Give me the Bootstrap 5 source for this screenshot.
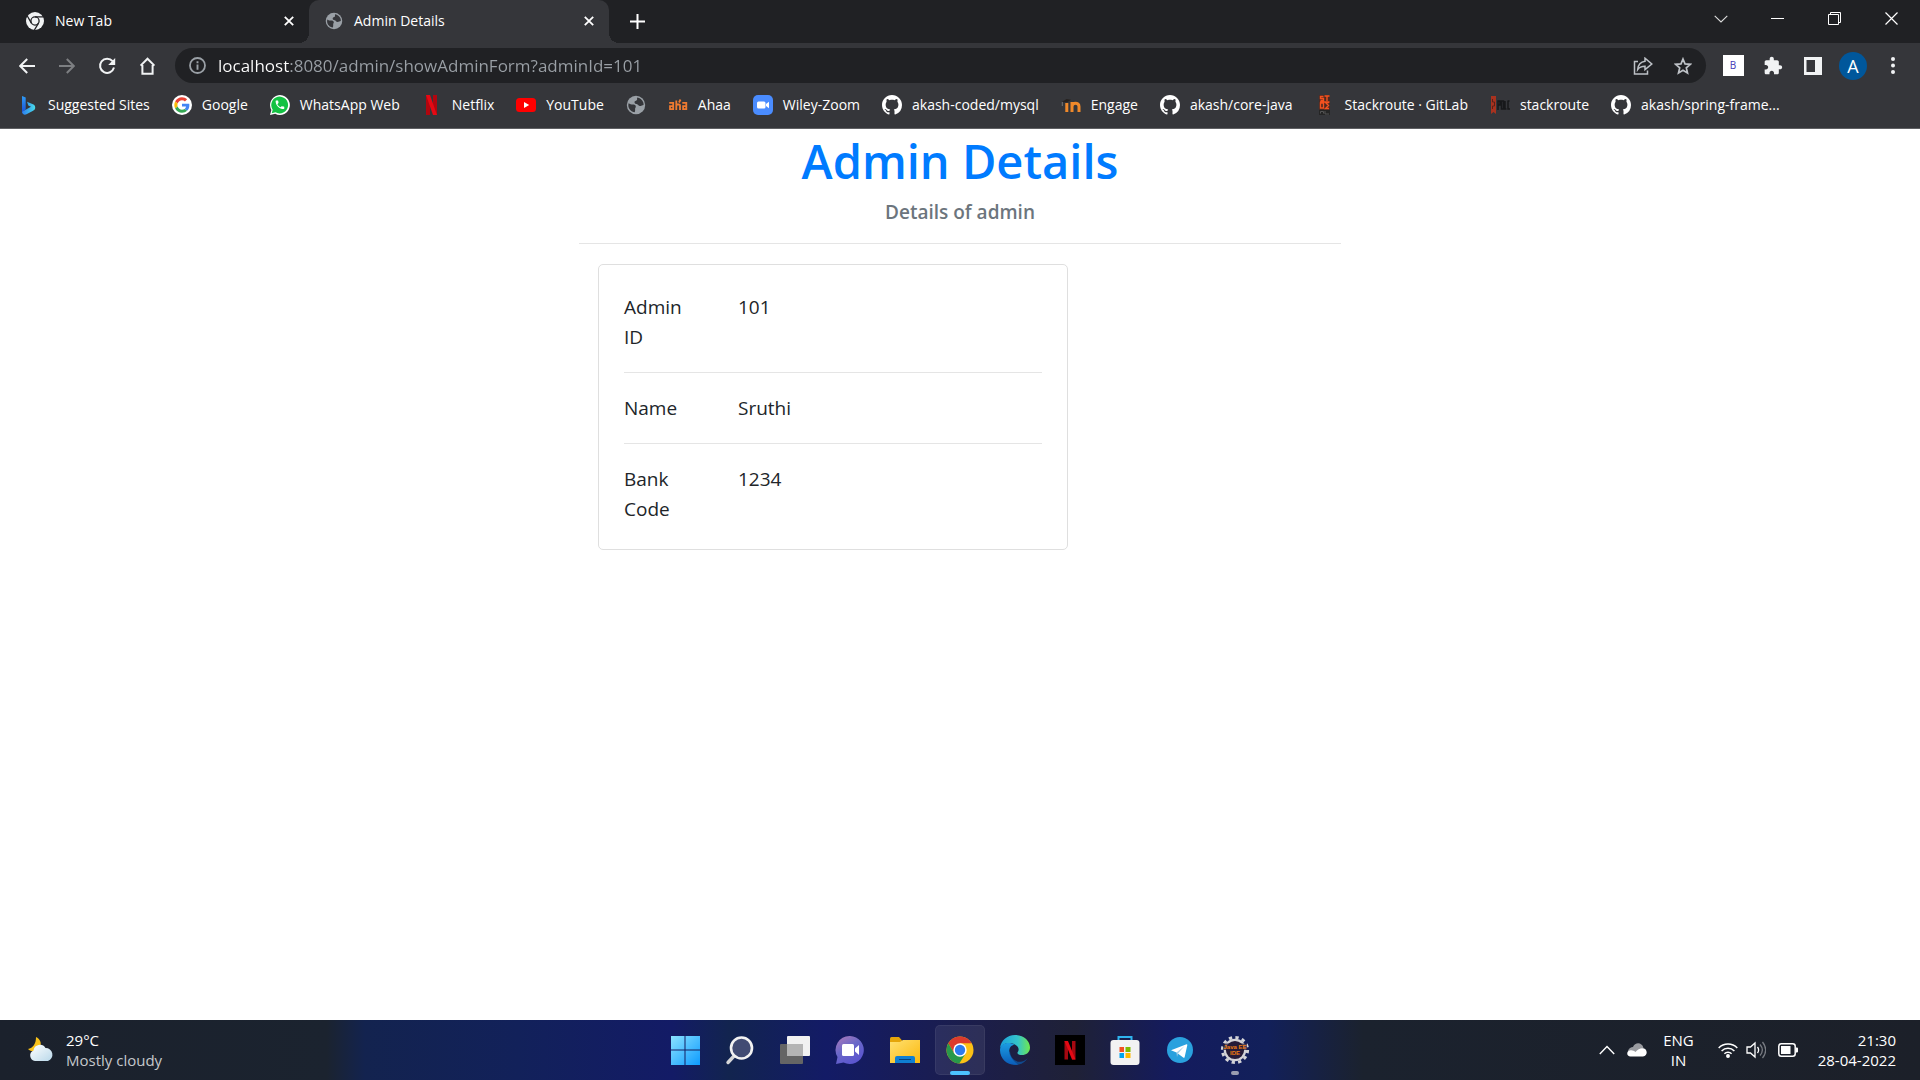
<!DOCTYPE html>
<html lang="en">
<head>
<meta charset="utf-8">
<meta name="viewport" content="width=device-width, initial-scale=1">
<title>Admin Details</title>
<link href="https://cdn.jsdelivr.net/npm/bootstrap@5.3.0/dist/css/bootstrap.min.css" rel="stylesheet">
<style>
  body { font-family: "Open Sans", "Noto Sans", sans-serif; background: #fff; overflow-x: hidden; }
  svg { display: block; flex: none; }
  button { background: none; border: 0; padding: 0; color: inherit; }
  .ui-text { font-size: 14px; line-height: 20px; }

  /* tab strip */
  .tab-strip { background: #202124; color: #fff; height: 43px; }
  .browser-tab { height: 43px; padding: 0 11px 2px 16px; gap: 11px; width: 300px; }
  .browser-tab.first { width: 309px; padding-left: 26px; }
  .browser-tab.current { background: #35363a; border-radius: 10px 10px 0 0; position: relative; }
  .browser-tab.current::before, .browser-tab.current::after {
    content: ""; position: absolute; bottom: 0; width: 10px; height: 10px;
  }
  .browser-tab.current::before { left: -10px; background: radial-gradient(circle at 0 0, transparent 10px, #35363a 10px); }
  .browser-tab.current::after { right: -10px; background: radial-gradient(circle at 100% 0, transparent 10px, #35363a 10px); }
  .icon-btn { width: 40px; height: 35px; display: flex; align-items: center; justify-content: center; flex: none; }
  .close-btn { width: 18px; height: 24px; display: flex; align-items: center; justify-content: center; }
  .window-btn { width: 57px; height: 37px; display: flex; align-items: center; justify-content: center; }

  /* toolbar */
  .toolbar { background: #35363a; color: #f1f3f4; padding: 5px 7px 0 7px; }
  .omnibox { background: #202124; border-radius: 18px; height: 35px; margin: 0 7px 0 8px; padding-left: 14px; padding-right: 3px; gap: 12px; }
  .url-input {
    border: 0; outline: 0; padding: 0; font-size: 17px; height: 30px; color: transparent;
    background: linear-gradient(90deg, #fff 72px, #9aa0a6 72px); -webkit-background-clip: text; background-clip: text;
  }
  .avatar { width: 28px; height: 28px; border-radius: 50%; background: #00579b; font-size: 18px; line-height: 28px; text-align: center; color: #fff; }
  .ext-b { width: 21px; height: 21px; background: #fff; color: #4338b5; font-size: 10px; line-height: 21px; text-align: center; }

  /* bookmarks */
  .bookmarks { background: #35363a; height: 46px; padding: 0 18px 2px; gap: 22px; border-bottom: 1px solid #5f6063; }
  .bookmarks a { color: #fff; text-decoration: none; display: flex; align-items: center; gap: 10px; white-space: nowrap; }

  /* page */
  .details-page { max-width: 762px; width: 100%; }
  .details-page h1 { color: #007bff; font-size: 47px; line-height: 60px; font-weight: 600; margin: 2px 0 9px; }
  .details-page h2 { color: #6c757d; font-size: 19px; line-height: 24px; font-weight: 600; margin: 0; }
  .details-page hr { margin: 19px 0 20px; border-top: 1px solid #e5e5e5; opacity: 1; }
  .details-page .row { --bs-gutter-x: 38px; }
  .details-page .card { border-color: #dfdfdf; border-radius: 5px; }
  .details-page .card-body { padding: 27px 25px 25px; font-size: 19px; line-height: 30px; color: #212529; }
  .details-page .card hr { margin: 20px 0; }

  /* taskbar */
  .taskbar {
    height: 60px; color: #fff; font-size: 15px; line-height: 20px;
    background: linear-gradient(90deg, #1b212c 0, #1b232f 17%, #13234f 19%, #12215a 27%, #131b66 35%, #12244f 38%, #131b66 43%, #1c1e4a 51%, #1f2136 56%, #141b5e 61%, #12205a 66%, #1b222e 71%, #1c2029 100%);
  }
  .task-list { gap: 5px; }
  .task-btn { width: 50px; height: 50px; display: flex; align-items: center; justify-content: center; position: relative; border-radius: 5px; }
  .task-btn.active { background: rgba(255,255,255,.08); box-shadow: inset 0 0 0 1px rgba(255,255,255,.06); }
  .task-btn.active::after, .task-btn.open::after { content: ""; position: absolute; bottom: 0; height: 4px; border-radius: 2px; }
  .task-btn.active::after { width: 20px; background: #4cc2ff; }
  .task-btn.open::after { width: 8px; background: #9a9db0; }
  .weather-sub { color: #c5c8cc; }
  .side { flex: 1 1 0; }
</style>
</head>
<body class="d-flex flex-column min-vh-100">

<svg width="0" height="0" class="position-absolute" aria-hidden="true">
  <symbol id="github" viewBox="0 0 16 16"><path fill="#fff" d="M8 0C3.58 0 0 3.58 0 8c0 3.54 2.29 6.53 5.47 7.59.4.07.55-.17.55-.38 0-.19-.01-.82-.01-1.49-2.01.37-2.53-.49-2.69-.94-.09-.23-.48-.94-.82-1.13-.28-.15-.68-.52-.01-.53.63-.01 1.08.58 1.23.82.72 1.21 1.87.87 2.33.66.07-.52.28-.87.51-1.07-1.78-.2-3.64-.89-3.64-3.95 0-.87.31-1.59.82-2.15-.08-.2-.36-1.02.08-2.12 0 0 .67-.21 2.2.82.64-.18 1.32-.27 2-.27.68 0 1.36.09 2 .27 1.53-1.04 2.2-.82 2.2-.82.44 1.1.16 1.92.08 2.12.51.56.82 1.27.82 2.15 0 3.07-1.87 3.75-3.65 3.95.29.25.54.73.54 1.48 0 1.07-.01 1.93-.01 2.2 0 .21.15.46.55.38A8.01 8.01 0 0 0 16 8c0-4.42-3.58-8-8-8z"/></symbol>
  <symbol id="globe" viewBox="0 0 20 20"><circle cx="10" cy="10" r="9.2" fill="#9aa0a6"/><path fill="#35363a" d="M2.6 8.2c1.2 1 2.700 1.200 4.200 1.200 1.700 0 3 .6 3 2 0 1-.7 1.300-.7 2.300 0 1.100.2 2.200-.4 3.600C4.900 16.700 2.300 13.800 2.300 10z"/><path fill="#35363a" d="M11.200 2.500c2.700.4 5 2.200 6 4.800.3.900.4 1.800.4 2.700-1.300.3-2.300 1-3.600 1-1.700 0-1.900-1.700-3.300-1.900-1.200-.2-2.200-.6-2.200-1.900 0-1.500 1.900-1.200 2.500-2.200.4-.8-.2-1.600.2-2.500z"/></symbol>
  <symbol id="cross" viewBox="0 0 10 10"><path d="M.8.8l8.400 8.400M9.200.8L.8 9.200" fill="none" stroke="currentColor" stroke-width="1.800"/></symbol>
</svg>

<header>
  <div class="tab-strip d-flex align-items-start ui-text">
    <div class="browser-tab first d-flex align-items-center">
      <svg width="18" height="18" viewBox="0 0 18 18"><circle cx="9" cy="9" r="9" fill="#f1f3f4"/><circle cx="9" cy="9" r="4.100" fill="none" stroke="#202124" stroke-width="1.300"/><path d="M9 4.900h8.500M5.400 11.100L1.300 4M12.500 11.100L8.400 18" stroke="#202124" stroke-width="1.300"/></svg>
      <span class="flex-grow-1">New Tab</span>
      <button class="close-btn" aria-label="Close New Tab"><svg width="10" height="10"><use href="#cross"/></svg></button>
    </div>
    <div class="browser-tab current d-flex align-items-center">
      <svg width="18" height="18"><use href="#globe"/></svg>
      <span class="flex-grow-1">Admin Details</span>
      <button class="close-btn" aria-label="Close Admin Details"><svg width="10" height="10"><use href="#cross"/></svg></button>
    </div>
    <button class="icon-btn ms-2 mt-1" aria-label="New tab"><svg width="15" height="15" viewBox="0 0 15 15"><path d="M7.500 0v15M0 7.500h15" stroke="#fff" stroke-width="2"/></svg></button>
    <div class="d-flex ms-auto">
      <button class="window-btn" aria-label="Search tabs"><svg width="14" height="8" viewBox="0 0 14 8"><path d="M.7.8L7 7 13.300.8" fill="none" stroke="#ddd" stroke-width="1.100"/></svg></button>
      <button class="window-btn" aria-label="Minimize"><svg width="13" height="1"><path d="M0 .5h13" stroke="#fff"/></svg></button>
      <button class="window-btn" aria-label="Restore"><svg width="13" height="13" viewBox="0 0 13 13"><path d="M.5 2.500h10v10H.5zM2.500 2.500v-2h10v10h-2" fill="none" stroke="#fff"/></svg></button>
      <button class="window-btn" aria-label="Close"><svg width="13" height="13" viewBox="0 0 13 13"><path d="M.5.5l12 12M12.500.5l-12 12" stroke="#fff" stroke-width="1.200"/></svg></button>
    </div>
  </div>

  <div class="toolbar d-flex align-items-center">
    <button class="icon-btn" aria-label="Back"><svg width="16" height="16" viewBox="0 0 16 16"><path d="M16 8H1.500M8.200 1L1.200 8l7 7" fill="none" stroke="#f1f3f4" stroke-width="2"/></svg></button>
    <button class="icon-btn" aria-label="Forward"><svg width="16" height="16" viewBox="0 0 16 16"><path d="M0 8h14.500M7.800 1l7 7-7 7" fill="none" stroke="#7d7f82" stroke-width="2"/></svg></button>
    <button class="icon-btn" aria-label="Reload"><svg width="18" height="18" viewBox="0 0 18 18"><path d="M14.600 4.200A7.100 7.100 0 1 0 16 10.600" fill="none" stroke="#f1f3f4" stroke-width="2"/><path d="M17.200 1v7h-7z" fill="#f1f3f4"/></svg></button>
    <button class="icon-btn" aria-label="Home"><svg width="17" height="18" viewBox="0 0 17 18"><path d="M1.600 8.600L8.500 1.700l6.900 6.900M3.400 8v8.800h10.200V8" fill="none" stroke="#f1f3f4" stroke-width="2"/></svg></button>
    <div class="omnibox d-flex align-items-center flex-grow-1">
      <svg width="17" height="17" viewBox="0 0 17 17"><circle cx="8.500" cy="8.500" r="7.500" fill="none" stroke="#9aa0a6" stroke-width="1.800"/><path d="M8.500 4.200v2M8.500 7.400v5.400" stroke="#9aa0a6" stroke-width="1.900"/></svg>
      <input class="url-input flex-grow-1" type="text" aria-label="Address" value="localhost:8080/admin/showAdminForm?adminId=101">
      <div class="d-flex">
        <button class="icon-btn" aria-label="Share"><svg width="20" height="18" viewBox="0 0 20 18"><path d="M5 4.500H1.500V17h13v-3.500" fill="none" stroke="#bdc1c6" stroke-width="1.500"/><path d="M12 4.300V1.200L18.800 7 12 12.600V9.300c-3.500 0-5.600.8-7.300 3.200.4-4.300 2.800-7.600 7.300-8.200z" fill="none" stroke="#bdc1c6" stroke-width="1.500"/></svg></button>
        <button class="icon-btn" aria-label="Bookmark"><svg width="18" height="18" viewBox="0 0 18 18"><path d="M9 2l2 4.900 5.300.4-4 3.500 1.200 5.200L9 13.200 4.500 16l1.200-5.200-4-3.500L7 6.900z" fill="none" stroke="#bdc1c6" stroke-width="1.700"/></svg></button>
      </div>
    </div>
    <button class="icon-btn" aria-label="Bootstrap extension"><span class="ext-b">B</span></button>
    <button class="icon-btn" aria-label="Extensions"><svg width="20" height="20" viewBox="0 0 24 24"><path fill="#f1f3f4" d="M20.500 11H19V7c0-1.100-.9-2-2-2h-4V3.500C13 2.120 11.880 1 10.500 1S8 2.120 8 3.500V5H4c-1.100 0-1.990.9-1.990 2v3.800H3.500c1.490 0 2.700 1.210 2.700 2.700s-1.210 2.700-2.700 2.700H2V20c0 1.100.9 2 2 2h3.800v-1.500c0-1.490 1.210-2.700 2.700-2.700 1.490 0 2.700 1.210 2.700 2.700V22H17c1.100 0 2-.9 2-2v-4h1.500c1.380 0 2.500-1.120 2.500-2.500S21.880 11 20.500 11z"/></svg></button>
    <button class="icon-btn" aria-label="Side panel"><svg width="18" height="18" viewBox="0 0 18 18"><path fill="#f1f3f4" fill-rule="evenodd" d="M0 0h18v18H0zM2.500 3v12H11V3z"/></svg></button>
    <button class="icon-btn" aria-label="Profile"><span class="avatar">A</span></button>
    <button class="icon-btn" aria-label="Menu"><svg width="4" height="17" viewBox="0 0 4 17" fill="#f1f3f4"><circle cx="2" cy="2" r="2"/><circle cx="2" cy="8.500" r="2"/><circle cx="2" cy="15" r="2"/></svg></button>
  </div>

  <nav class="bookmarks d-flex align-items-center ui-text" aria-label="Bookmarks">
    <a href="#"><svg width="20" height="20" viewBox="0 0 20 20"><defs><linearGradient id="bg1" x1="0" y1="0" x2="0" y2="1"><stop offset="0" stop-color="#2f9cf5"/><stop offset="1" stop-color="#1b52d8"/></linearGradient><linearGradient id="bg2"><stop offset="0" stop-color="#2b7cf0"/><stop offset="1" stop-color="#49dbe8"/></linearGradient></defs><path fill="url(#bg1)" d="M4 1l3.700 1.600v12L4 17z"/><path fill="url(#bg2)" d="M4 16.800l9-5-2.700-1.300L9 6.800l6.500 2.700c1.500 1 2 2.400 1.500 4.300-.4 1-1 1.500-1.900 2L8 19.500c-2 .6-4-.7-4-2.700z"/></svg>Suggested Sites</a>
    <a href="#"><svg width="20" height="20" viewBox="0 0 48 48"><circle cx="24" cy="24" r="24" fill="#fff"/><g transform="translate(5.500 5.500) scale(.77)"><path fill="#EA4335" d="M24 9.500c3.540 0 6.710 1.220 9.210 3.600l6.850-6.850C35.900 2.380 30.470 0 24 0 14.620 0 6.510 5.380 2.560 13.220l7.980 6.190C12.430 13.720 17.740 9.500 24 9.500z"/><path fill="#4285F4" d="M46.980 24.550c0-1.570-.15-3.090-.38-4.550H24v9.020h12.940c-.58 2.960-2.260 5.480-4.780 7.180l7.730 6c4.510-4.180 7.090-10.360 7.090-17.650z"/><path fill="#FBBC05" d="M10.530 28.590c-.48-1.450-.76-2.990-.76-4.590s.27-3.140.76-4.590l-7.980-6.190C.92 16.460 0 20.120 0 24c0 3.880.92 7.540 2.560 10.780l7.970-6.190z"/><path fill="#34A853" d="M24 48c6.480 0 11.930-2.130 15.890-5.810l-7.730-6c-2.150 1.450-4.920 2.300-8.160 2.300-6.260 0-11.570-4.220-13.470-9.910l-7.980 6.190C6.510 42.620 14.620 48 24 48z"/></g></svg>Google</a>
    <a href="#"><svg width="20" height="20" viewBox="0 0 20 20"><path fill="#fff" d="M0 20l1.400-5A9.900 9.900 0 1 1 5.200 18.700z"/><path fill="#13c243" d="M1.700 18.300l1-3.600a8.400 8.400 0 1 1 2.800 2.600z"/><g transform="translate(4.200 4) scale(.48)"><path fill="#fff" d="M6.620 10.790c1.440 2.830 3.760 5.140 6.590 6.590l2.200-2.200c.27-.27.67-.36 1.020-.24 1.120.37 2.330.57 3.570.57.55 0 1 .45 1 1V20c0 .55-.45 1-1 1-9.390 0-17-7.610-17-17 0-.55.45-1 1-1h3.500c.55 0 1 .45 1 1 0 1.250.2 2.450.57 3.570.11.35.03.74-.25 1.020l-2.200 2.200z"/></g></svg>WhatsApp Web</a>
    <a href="#"><svg width="20" height="20" viewBox="0 0 20 20"><path fill="#b1060f" d="M4 0h4v20H4zM11 0h4v20h-4z"/><path fill="#e50914" d="M4 0h4l7 20h-4z"/></svg>Netflix</a>
    <a href="#"><svg width="20" height="20" viewBox="0 0 20 20"><rect y="3" width="20" height="14" rx="3.500" fill="#f00"/><path fill="#fff" d="M8 7l5.200 3L8 13z"/></svg>YouTube</a>
    <a href="#" aria-label="Bookmark"><svg width="20" height="20"><use href="#globe"/></svg></a>
    <a href="#"><svg width="20" height="20" viewBox="0 0 20 20" fill="none" stroke="#ef7a30" stroke-width="1.800"><path d="M1.200 7.900h4v6.200H2v-3h3.200M8.300 5.500V15M8.300 9.500h2.700q1 0 1 1V15M11 7.500l1.500-3M14.300 7.900h4v6.200h-3.200v-3h3.200"/></svg>Ahaa</a>
    <a href="#"><svg width="20" height="20" viewBox="0 0 20 20"><rect width="20" height="20" rx="5" fill="#4a8cff"/><rect x="4" y="6.500" width="8.500" height="7" rx="1.500" fill="#fff"/><path fill="#fff" d="M13 9l3-2.200v6.400L13 11z"/></svg>Wiley-Zoom</a>
    <a href="#"><svg width="20" height="20"><use href="#github"/></svg>akash-coded/mysql</a>
    <a href="#"><svg width="20" height="20" viewBox="0 0 20 20"><path d="M1 7l4.500-3 4.500.8-4 2.400z" fill="#26211f"/><path d="M1.300 7v4" stroke="#777"/><path d="M5.800 8v9M11 17V7M11 11.500c0-4.500 7-4.500 7 0V17" fill="none" stroke="#f0892a" stroke-width="3"/></svg>Engage</a>
    <a href="#"><svg width="20" height="20"><use href="#github"/></svg>akash/core-java</a>
    <a href="#"><svg width="20" height="20" viewBox="0 0 20 20"><rect x="4" width="11" height="20" fill="#4b2a22"/><path d="M8.500 1.500h-3v2h3v2h-3M9.500 1h5M12 1v5M5.500 8h3v5h-3zM14 7.500h-3.500l3 3-3 3H14M5 7h9.500" fill="none" stroke="#f4511e" stroke-width="1.400"/><path d="M4 15h11v5H4z" fill="#252525"/><path d="M5.500 18.500v-2h3v2M10 16v3h4" fill="none" stroke="#555"/></svg>Stackroute · GitLab</a>
    <a href="#"><svg width="20" height="20" viewBox="0 0 20 20"><path fill="#a8321f" d="M1 1h5v18l-2.500-2L1 19z"/><path d="M2.500 4v3h2v4h-2v3" fill="none" stroke="#5a2019"/><path d="M8 15V6h2v4H8M11.500 6h2v8h-2zM15 6v8h1.500M17.500 6h2M18 6v8h2" fill="none" stroke="#17181a" stroke-width="1.500"/></svg>stackroute</a>
    <a href="#"><svg width="20" height="20"><use href="#github"/></svg>akash/spring-frame...</a>
  </nav>
</header>

<main class="flex-grow-1">
  <div class="details-page mx-auto">
    <h1 class="text-center">Admin Details</h1>
    <h2 class="text-center">Details of admin</h2>
    <hr>
    <div class="row mx-0">
      <div class="col-8">
        <div class="card">
          <div class="card-body">
            <div class="row"><div class="col-3">Admin ID</div><div class="col-9">101</div></div>
            <hr>
            <div class="row"><div class="col-3">Name</div><div class="col-9">Sruthi</div></div>
            <hr>
            <div class="row"><div class="col-3">Bank Code</div><div class="col-9">1234</div></div>
          </div>
        </div>
      </div>
    </div>
  </div>
</main>

<footer class="taskbar d-flex align-items-center">
  <div class="side d-flex align-items-center px-4">
    <svg width="30" height="30" viewBox="0 0 30 30" class="me-2"><defs><linearGradient id="cl" x1="0" y1="0" x2="1" y2="1"><stop offset="0" stop-color="#fff"/><stop offset="1" stop-color="#b9d8ea"/></linearGradient></defs><path fill="#f9c21a" d="M12 2c4 2 6 6 4 10-2 4-8 6-12 2 5-1 8-5 8-12z"/><path fill="url(#cl)" d="M11 26a5.500 5.500 0 0 1-1.500-10.500A6.500 6.500 0 0 1 21.500 13 6.700 6.700 0 0 1 24 26z"/></svg>
    <div class="ms-1"><div>29°C</div><div class="weather-sub">Mostly cloudy</div></div>
  </div>

  <div class="task-list d-flex">
    <button class="task-btn" aria-label="Start"><svg width="30" height="30" viewBox="0 0 30 30"><defs><linearGradient id="win" gradientUnits="userSpaceOnUse" x1="1" y1="1" x2="30" y2="30"><stop offset="0" stop-color="#8be2ff"/><stop offset="1" stop-color="#0d9bff"/></linearGradient></defs><path fill="url(#win)" d="M1 1h13.500v13.500H1zM15.500 1H30v13.500H15.500zM1 15.500h13.500V30H1zM15.500 15.500H30V30H15.500z"/></svg></button>
    <button class="task-btn" aria-label="Search"><svg width="30" height="30" viewBox="0 0 30 30"><path d="M9.500 20.500l-6.500 7" stroke="#d5d6d8" stroke-width="3.400" stroke-linecap="round"/><circle cx="16.500" cy="13" r="10.500" fill="#414b73" stroke="#f2f2f2" stroke-width="2.600"/></svg></button>
    <button class="task-btn" aria-label="Task view"><svg width="30" height="30" viewBox="0 0 30 30"><rect y="9" width="23" height="20" rx="1" fill="#656565"/><rect x="7" y="1" width="23" height="20" rx="1" fill="#f1f1f1"/><path fill="#b4b4b4" d="M7 9h16v12H7z"/></svg></button>
    <button class="task-btn" aria-label="Chat"><svg width="30" height="30" viewBox="0 0 30 30"><defs><linearGradient id="ch" x1="0" y1="0" x2=".6" y2="1"><stop offset="0" stop-color="#b07ab8"/><stop offset=".5" stop-color="#6a68c8"/><stop offset="1" stop-color="#5b55cf"/></linearGradient></defs><path fill="url(#ch)" d="M15 1a14 14 0 1 1-6.500 26.500L1 29l1.500-7A14 14 0 0 1 15 1z"/><rect x="7" y="9" width="12" height="12" rx="1.500" fill="#fff"/><path fill="#fff" d="M20 13.500l4-3.500v10l-4-3.500z"/></svg></button>
    <button class="task-btn" aria-label="File Explorer"><svg width="30" height="30" viewBox="0 0 30 30"><defs><linearGradient id="fo" x1="0" y1="0" x2="1" y2="1"><stop offset="0" stop-color="#ffe071"/><stop offset="1" stop-color="#fbb90d"/></linearGradient></defs><path fill="#e5a50a" d="M0 3.500Q0 2 1.500 2H9l3.500 4V10H0z"/><path fill="url(#fo)" d="M0 7h10l3-2h17v23H0z"/><path fill="#0f7fd2" d="M5 28v-5q0-2 2-2h16q2 0 2 2v5z"/><path d="M9 24.500h12" stroke="#07437c"/></svg></button>
    <button class="task-btn active" aria-label="Chrome"><svg width="30" height="30" viewBox="0 0 30 30"><circle cx="15" cy="15" r="13.500" fill="#fbc116"/><path fill="#db3a2d" d="M3.300 8.300A13.500 13.500 0 0 1 26.700 8.300H15v6L9.200 18.300z"/><path fill="#28994a" d="M3.300 8.300a13.500 13.500 0 0 0 11 20.200l6.500-10.200L15 15 9.200 18.300z"/><circle cx="15" cy="15" r="6.700" fill="#fff"/><circle cx="15" cy="15" r="5.200" fill="#2c7bef"/></svg></button>
    <button class="task-btn" aria-label="Edge"><svg width="30" height="30" viewBox="0 0 30 30"><defs><linearGradient id="e1"><stop offset="0" stop-color="#1aa0dc"/><stop offset=".6" stop-color="#35c4c9"/><stop offset="1" stop-color="#6fe84e"/></linearGradient><linearGradient id="e2" x1="0" y1="0" x2="0" y2="1"><stop offset="0" stop-color="#1b9de2"/><stop offset="1" stop-color="#0b5cb8"/></linearGradient></defs><path fill="#104a8e" d="M10 16c0 7 6 12 12 10.500 2.500-.6 4.500-2 6-4C25.500 27 21 30 15.500 30 8 29 6 21 10 16z"/><path fill="url(#e1)" d="M0 13C1 5.500 7 0 15 0c9 0 15 6 15 12.500 0 5-4 7.500-8 7.500-3 0-5-1-4.500-2.500 2-2.500 1-5-.5-6.500C12 6 3 7.500 0 13z"/><path fill="url(#e2)" d="M0 15C0 8.500 9 6 14.500 10c-4.500 0-6.500 5-4.500 10 1.500 4 4.500 7 8 9.500C9 31.500 0 25 0 15z"/></svg></button>
    <button class="task-btn" aria-label="Netflix"><svg width="30" height="30" viewBox="0 0 30 30"><path d="M0 0h30v30H0z"/><path fill="#a50811" d="M9.500 6h3.500v18.500H9.500zM17 6h3.500v18.500H17z"/><path fill="#e50914" d="M9.500 6H13l7.500 18.500H17z"/></svg></button>
    <button class="task-btn" aria-label="Microsoft Store"><svg width="30" height="30" viewBox="0 0 30 30"><path d="M8.500 7V2h13v5" fill="none" stroke="#2fb3ee" stroke-width="2"/><rect x=".5" y="5" width="29" height="25" rx="3" fill="#f2f2f2"/><path fill="#f25022" d="M9.500 12H14v5H9.500z"/><path fill="#7fba00" d="M15.500 12h5v5h-5z"/><path fill="#00a4ef" d="M9.500 18H14v5H9.500z"/><path fill="#ffb900" d="M15.500 18h5v5h-5z"/></svg></button>
    <button class="task-btn" aria-label="Telegram"><svg width="30" height="30" viewBox="0 0 30 30"><circle cx="15" cy="15" r="13" fill="#2aa1de"/><path fill="#fff" d="M6 15.200l15.500-6q1-.2.800 1l-2.700 12q-.4 1-1.400.4l-6.700-5z"/><path d="M11.500 17.500l8-6.500-6.500 7.500-1 3.500z" fill="#a9cfe6"/></svg></button>
    <button class="task-btn open" aria-label="Java EE IDE"><svg width="30" height="30" viewBox="0 0 30 30"><circle cx="15" cy="15" r="12.600" fill="none" stroke="#d4d4d8" stroke-width="3" stroke-dasharray="3.300 3.300"/><circle cx="15" cy="15" r="10.200" fill="#251c38" stroke="#d4d4d8" stroke-width="2.200"/><path d="M3 8.500h24v6.500H3z" fill="#251c38" opacity=".75"/><text x="15" y="14" text-anchor="middle" font-family="Liberation Sans, sans-serif" font-size="6" font-weight="700" fill="#f07c13">Java EE</text><text x="15" y="20" text-anchor="middle" font-family="Liberation Sans, sans-serif" font-size="6" font-weight="700" fill="#f07c13">IDE</text></svg></button>
  </div>

  <div class="side d-flex align-items-center justify-content-end px-4">
    <svg width="16" height="10" viewBox="0 0 16 10" class="me-2"><path d="M.8 9L8 1.500 15.200 9" fill="none" stroke="#fff" stroke-width="1.400"/></svg>
    <svg width="20" height="14" viewBox="0 0 20 14" class="ms-1"><path fill="#999ba0" d="M1 8C2 5 4 4 6 4 8-1 15-1 16.500 5L8 10z"/><path fill="#fff" d="M3.500 13.500C-.5 13.500-1 8 3 7.500 5 7 7 8 8.500 9c2-2.500 6-4.500 8.500-3.500 3.500 1 4 7.500-1 8z"/></svg>
    <div class="text-center ms-3 me-4"><div>ENG</div><div>IN</div></div>
    <svg width="20" height="16" viewBox="0 0 20 16" fill="none" stroke="#fff" stroke-width="1.500"><path d="M.7 6a13 13 0 0 1 18.600 0M3.600 9a9 9 0 0 1 12.800 0M6.400 11.800a5 5 0 0 1 7.200 0"/><circle cx="10" cy="14" r="1.200" fill="#fff"/></svg>
    <svg width="20" height="18" viewBox="0 0 20 18" fill="none" stroke="#fff" stroke-width="1.300" class="mx-2"><path d="M1 6h3.500L9 2v14l-4.500-4H1zM11.500 6c1.500 2 1.500 4 0 6"/><path stroke="#787b82" d="M14 3.500c3 3.500 3 7.500 0 11M16.500 1c4 5 4 11 0 16"/></svg>
    <svg width="20" height="14" viewBox="0 0 20 14" class="ms-1 me-3"><rect x=".8" y=".8" width="16.400" height="12.400" rx="2.500" fill="none" stroke="#fff" stroke-width="1.500"/><path fill="#fff" d="M3 3h9.500v8H3zM18 4.500h1q1 0 1 1v3q0 1-1 1h-1z"/></svg>
    <div class="text-end ms-1"><div>21:30</div><div>28-04-2022</div></div>
  </div>
</footer>

<script src="https://cdn.jsdelivr.net/npm/bootstrap@5.3.0/dist/js/bootstrap.bundle.min.js"></script>
</body>
</html>
